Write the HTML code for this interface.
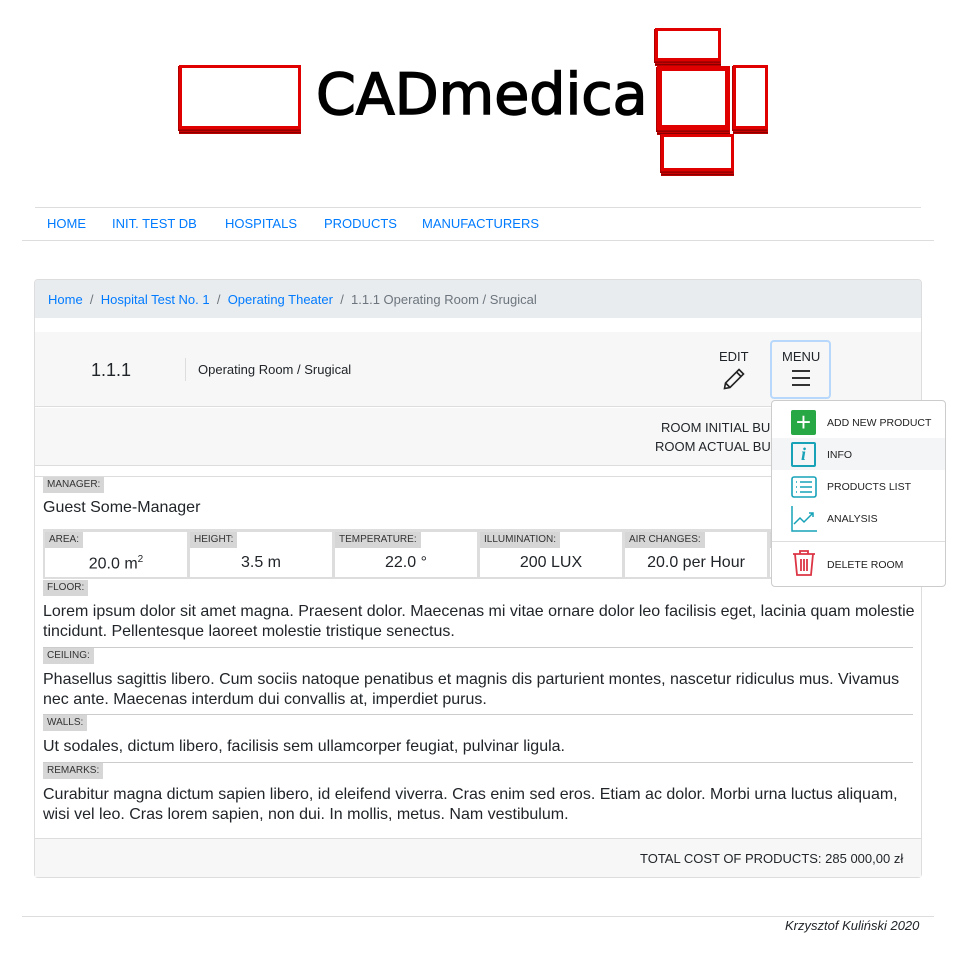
<!DOCTYPE html>
<html><head><meta charset="utf-8"><style>
*{box-sizing:border-box;margin:0;padding:0}
body{width:958px;height:958px;background:#fff;font-family:"Liberation Sans",sans-serif;color:#212529;position:relative;overflow:hidden}
.a{position:absolute}
.r{position:absolute;background:#fff;border:3px solid #e00000;box-shadow:-1px 1px 0 #b00000,-1px 2px 0 #900,0 3px 0 #c00,0 4px 0 #800,0 5px 0 #b00;}
.nav a{color:#007bff;font-size:13px;text-decoration:none;position:absolute;top:216px}
.lbl{position:absolute;background:#d6d6d6;font-size:10px;color:#333;padding:2px 4px;line-height:12px}
.txt{position:absolute;left:43px;font-size:16px;line-height:19.5px;width:872px}
.hr{position:absolute;left:43px;width:870px;height:1px;background:#ccc}
.cell{position:absolute;top:530px;height:49px;width:146px;border:2px solid #ddd;background:#fff}
.cell .v{position:absolute;top:22px;width:100%;text-align:center;font-size:16px}
.mi{position:absolute;left:827px;font-size:10.5px;color:#222}
</style></head><body>
<!-- logo -->
<div class="r" style="left:179px;top:65px;width:122px;height:64px"></div>
<div class="a" style="left:316px;top:62px;font-size:57px;font-family:'DejaVu Sans','Liberation Sans',sans-serif;color:#000;-webkit-text-stroke:1.5px #000">CADmedica</div>
<div class="r" style="left:655px;top:28px;width:66px;height:33px"></div>
<div class="r" style="left:657px;top:66px;width:73px;height:64px;border-width:5px"></div>
<div class="r" style="left:733px;top:65px;width:35px;height:64px"></div>
<div class="r" style="left:661px;top:134px;width:73px;height:37px"></div>
<!-- nav -->
<div class="a" style="left:35px;top:207px;width:886px;height:1px;background:#ddd"></div>
<div class="a" style="left:22px;top:240px;width:912px;height:1px;background:#ddd"></div>
<div class="nav"><a style="left:47px">HOME</a><a style="left:112px">INIT. TEST DB</a><a style="left:225px">HOSPITALS</a><a style="left:324px">PRODUCTS</a><a style="left:422px">MANUFACTURERS</a></div>
<!-- card -->
<div class="a" style="left:34px;top:279px;width:888px;height:599px;border:1px solid #ddd;border-radius:4px"></div>
<div class="a" style="left:35px;top:280px;width:886px;height:38px;background:#e9ecef;border-radius:3px 3px 0 0"></div>
<div class="a" style="left:48px;top:292px;font-size:13px;color:#6c757d"><span style="color:#007bff">Home</span>&nbsp; / &nbsp;<span style="color:#007bff">Hospital Test No. 1</span>&nbsp; / &nbsp;<span style="color:#007bff">Operating Theater</span>&nbsp; / &nbsp;1.1.1 Operating Room / Srugical</div>
<div class="a" style="left:35px;top:332px;width:886px;height:75px;background:#f7f7f7;border-bottom:1px solid #ddd"></div>
<div class="a" style="left:91px;top:360px;font-size:18px">1.1.1</div>
<div class="a" style="left:185px;top:358px;width:1px;height:23px;background:#ddd"></div>
<div class="a" style="left:198px;top:362px;font-size:13px">Operating Room / Srugical</div>
<div class="a" style="left:719px;top:349px;font-size:13px">EDIT</div>
<svg class="a" style="left:722px;top:367px" width="24" height="24" viewBox="0 0 24 24" fill="none" stroke="#222" stroke-width="1.6"><path d="M17 2.5l4.5 4.5L8 20.5 2.5 21.5 3.5 16z M14.5 5l4.5 4.5 M3.5 16l4.5 4.5"/></svg>
<div class="a" style="left:770px;top:340px;width:61px;height:59px;border:2px solid #b8d8fb;border-radius:4px"></div>
<div class="a" style="left:782px;top:349px;font-size:13px">MENU</div>
<div class="a" style="left:792px;top:370px;width:18px;height:2px;background:#333;box-shadow:0 7px 0 #333,0 14px 0 #333"></div>
<div class="a" style="left:35px;top:408px;width:886px;height:58px;background:#f7f7f7;border-bottom:1px solid #ddd"></div>
<div class="a" style="left:661px;top:420px;font-size:13px;white-space:nowrap">ROOM INITIAL BUDGET:</div>
<div class="a" style="left:655px;top:439px;font-size:13px;white-space:nowrap">ROOM ACTUAL BUDGET:</div>
<div class="a" style="left:35px;top:476px;width:886px;height:1px;background:#ddd"></div>
<div class="lbl" style="left:43px;top:477px">MANAGER:</div>
<div class="txt" style="top:498px">Guest Some-Manager</div>
<div class="a" style="left:43px;top:529px;width:872px;height:2px;background:#ddd"></div>
<div class="cell" style="left:43px"><div class="lbl" style="left:0;top:0">AREA:</div><div class="v">20.0 m<sup style="font-size:10px">2</sup></div></div>
<div class="cell" style="left:188px"><div class="lbl" style="left:0;top:0">HEIGHT:</div><div class="v">3.5 m</div></div>
<div class="cell" style="left:333px"><div class="lbl" style="left:0;top:0">TEMPERATURE:</div><div class="v">22.0 °</div></div>
<div class="cell" style="left:478px"><div class="lbl" style="left:0;top:0">ILLUMINATION:</div><div class="v">200 LUX</div></div>
<div class="cell" style="left:623px"><div class="lbl" style="left:0;top:0">AIR CHANGES:</div><div class="v">20.0 per Hour</div></div>
<div class="cell" style="left:768px;width:147px"><div class="lbl" style="left:0;top:0">X</div></div>
<div class="lbl" style="left:43px;top:580px">FLOOR:</div>
<div class="txt" style="top:602px">Lorem ipsum dolor sit amet magna. Praesent dolor. Maecenas mi vitae ornare dolor leo facilisis eget, lacinia quam molestie tincidunt. Pellentesque laoreet molestie tristique senectus.</div>
<div class="hr" style="top:647px"></div>
<div class="lbl" style="left:43px;top:648px">CEILING:</div>
<div class="txt" style="top:670px">Phasellus sagittis libero. Cum sociis natoque penatibus et magnis dis parturient montes, nascetur ridiculus mus. Vivamus nec ante. Maecenas interdum dui convallis at, imperdiet purus.</div>
<div class="hr" style="top:714px"></div>
<div class="lbl" style="left:43px;top:715px">WALLS:</div>
<div class="txt" style="top:737px">Ut sodales, dictum libero, facilisis sem ullamcorper feugiat, pulvinar ligula.</div>
<div class="hr" style="top:762px"></div>
<div class="lbl" style="left:43px;top:763px">REMARKS:</div>
<div class="txt" style="top:785px">Curabitur magna dictum sapien libero, id eleifend viverra. Cras enim sed eros. Etiam ac dolor. Morbi urna luctus aliquam, wisi vel leo. Cras lorem sapien, non dui. In mollis, metus. Nam vestibulum.</div>
<div class="a" style="left:35px;top:838px;width:886px;height:39px;background:#f7f7f7;border-top:1px solid #ddd"></div>
<div class="a" style="left:640px;top:851px;font-size:13px">TOTAL COST OF PRODUCTS: 285 000,00 zł</div>
<!-- footer -->
<div class="a" style="left:22px;top:916px;width:912px;height:1px;background:#ddd"></div>
<div class="a" style="left:785px;top:918px;font-size:13px;font-style:italic">Krzysztof Kuliński 2020</div>
<!-- dropdown -->
<div class="a" style="left:771px;top:400px;width:175px;height:187px;background:#fff;border:1px solid #ccc;border-radius:4px"></div>
<div class="a" style="left:772px;top:438px;width:173px;height:32px;background:#f4f5f7"></div>
<div class="a" style="left:772px;top:541px;width:173px;height:1px;background:#ddd"></div>
<div class="a" style="left:791px;top:410px;width:25px;height:25px;background:#28a745;border-radius:2px;color:#fff;font-size:26px;line-height:24px;text-align:center">+</div>
<div class="mi" style="top:417px">ADD NEW PRODUCT</div>
<div class="a" style="left:791px;top:442px;width:25px;height:25px;border:2px solid #17a2b8;border-radius:2px;color:#17a2b8;font-family:'Liberation Serif',serif;font-style:italic;font-weight:bold;font-size:18px;line-height:21px;text-align:center">i</div>
<div class="mi" style="top:449px">INFO</div>
<svg class="a" style="left:791px;top:476px" width="26" height="22" viewBox="0 0 26 22" fill="none" stroke="#17a2b8" stroke-width="1.6"><rect x="1" y="1" width="24" height="20" rx="2"/><path d="M5 6h1M5 11h1M5 16h1M9 6h12M9 11h12M9 16h12"/></svg>
<div class="mi" style="top:481px">PRODUCTS LIST</div>
<svg class="a" style="left:791px;top:506px" width="26" height="26" viewBox="0 0 26 26" fill="none" stroke="#17a2b8" stroke-width="1.5"><path d="M1 0v25h25M3 18l6-6 4 4 9-9M18 7h4v4"/></svg>
<div class="mi" style="top:513px">ANALYSIS</div>
<svg class="a" style="left:792px;top:550px" width="24" height="26" viewBox="0 0 24 26" fill="none" stroke="#dc3545" stroke-width="1.8"><path d="M1 4h22M8 4V1h8v3M3 4l2 21h14l2-21M9 9v12M12 9v12M15 9v12"/></svg>
<div class="mi" style="top:559px">DELETE ROOM</div>
</body></html>
